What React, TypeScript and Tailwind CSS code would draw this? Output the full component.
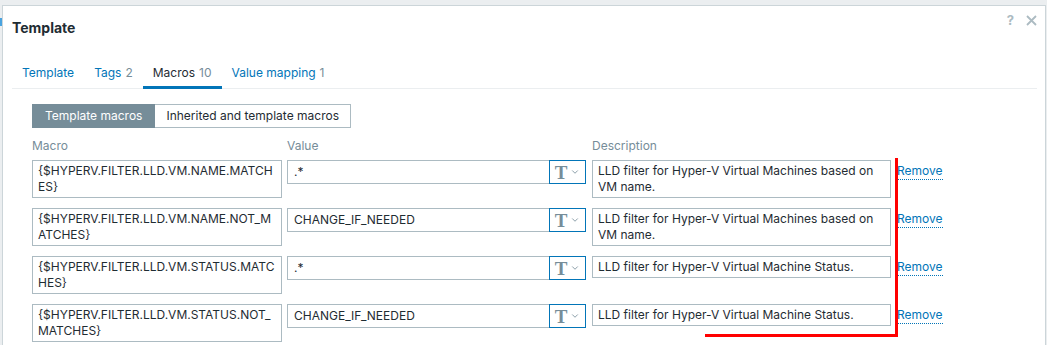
import { ChevronDown } from "lucide-react";

type MacroRow = {
  macro: string[];
  value: string;
  description: string[];
};

const rows: MacroRow[] = [
  {
    macro: ["{$HYPERV.FILTER.LLD.VM.NAME.MATCH", "ES}"],
    value: ".*",
    description: ["LLD filter for Hyper-V Virtual Machines based on", "VM name."],
  },
  {
    macro: ["{$HYPERV.FILTER.LLD.VM.NAME.NOT_M", "ATCHES}"],
    value: "CHANGE_IF_NEEDED",
    description: ["LLD filter for Hyper-V Virtual Machines based on", "VM name."],
  },
  {
    macro: ["{$HYPERV.FILTER.LLD.VM.STATUS.MATC", "HES}"],
    value: ".*",
    description: ["LLD filter for Hyper-V Virtual Machine Status."],
  },
  {
    macro: ["{$HYPERV.FILTER.LLD.VM.STATUS.NOT_", "MATCHES}"],
    value: "CHANGE_IF_NEEDED",
    description: ["LLD filter for Hyper-V Virtual Machine Status."],
  },
];

const tabs = [
  { label: "Template", count: "" },
  { label: "Tags", count: "2" },
  { label: "Macros", count: "10", active: true },
  { label: "Value mapping", count: "1" },
];

function Row({ row }: { row: MacroRow }) {
  return (
    <div className="flex items-start mb-[10px]">
      {/* Macro */}
      <div className="w-[250px] border border-[#acbbc2] px-[5px] py-[2px] leading-[16px] text-[12px] text-[#1f2c33]">
        {row.macro.map((l, i) => (
          <div key={i} className="whitespace-nowrap">
            {l}
          </div>
        ))}
      </div>

      {/* Value */}
      <div className="ml-[5px] flex h-[24px]">
        <div className="w-[262px] border border-[#acbbc2] border-r-0 px-[6px] leading-[22px] text-[12px] text-[#1f2c33]">
          {row.value}
        </div>
        <div className="w-[37px] border border-[#0275b8] flex items-center justify-center gap-[3px]">
          <span
            className="text-[19px] leading-none font-bold text-[#768d99]"
            style={{ fontFamily: '"Liberation Serif", serif' }}
          >
            T
          </span>
          <ChevronDown size={10} strokeWidth={2} className="text-[#768d99]" />
        </div>
      </div>

      {/* Description */}
      <div className="ml-[6px] w-[299px] border border-[#acbbc2] px-[5px] py-[2px] leading-[16px] text-[12px] text-[#1f2c33]">
        {row.description.map((l, i) => (
          <div key={i} className="whitespace-nowrap">
            {l}
          </div>
        ))}
      </div>

      <a className="ml-[6px] mt-[3px] text-[12px] leading-[16px] text-[#0275b8] border-b border-dotted border-[#0275b8]">
        Remove
      </a>
    </div>
  );
}

export default function App() {
  return (
    <div
      className="relative h-[345px] w-[1047px] overflow-hidden bg-[#ebeef0] pt-[5px] pl-[2px] pr-[1px]"
      style={{ fontFamily: "Inter, Arial, sans-serif" }}
    >
      {/* bit of the page behind the dialog */}
      <div className="absolute left-0 top-[18px] h-[8px] w-[2px] bg-[#4aa3df]" />

      <div className="relative h-[400px] bg-white border border-[#ccd5d9]">
        {/* Header */}
        <div className="pl-[9px] pt-[13px] text-[14px] leading-[18px] font-bold text-[#1f2c33]">
          Template
        </div>
        <div className="absolute right-[8px] top-[8px] flex items-center gap-[12px] text-[#acbbc2]">
          <span className="text-[13px] font-bold leading-none">?</span>
          <svg width="11" height="11" viewBox="0 0 11 11">
            <path d="M1 1L10 10M10 1L1 10" stroke="#acbbc2" strokeWidth="1.8" />
          </svg>
        </div>

        {/* Tabs */}
        <div className="mt-[22px] ml-[9px] mr-[8px] flex border-b border-[#ebeef0] text-[12px] leading-[16px]">
          {tabs.map((t) => (
            <div
              key={t.label}
              className={
                t.active
                  ? "-mb-px px-[10px] pt-[6px] pb-[5px] border-b-[3px] border-[#0275b8] text-[#1f2c33]"
                  : "-mb-px px-[10px] pt-[6px] pb-[5px] border-b-[3px] border-transparent text-[#0275b8]"
              }
            >
              {t.label}
              {t.count && <span className="ml-[4px] text-[#768d99]">{t.count}</span>}
            </div>
          ))}
        </div>

        {/* Content */}
        <div className="pl-[29px] pt-[15px]">
          <div className="flex h-[24px] text-[12px] leading-[22px]">
            <div className="px-[12px] bg-[#768d99] border border-[#768d99] text-white">Template macros</div>
            <div className="px-[11px] border border-[#acbbc2] border-l-0 text-[#1f2c33]">
              Inherited and template macros
            </div>
          </div>

          <div className="mt-[10px] flex text-[12px] leading-[16px] text-[#768d99]">
            <div className="w-[255px]">Macro</div>
            <div className="w-[305px]">Value</div>
            <div>Description</div>
          </div>

          <div className="mt-[6px]">
            {rows.map((r, i) => (
              <Row key={i} row={r} />
            ))}
          </div>
        </div>
      </div>

      {/* red annotation drawn over the screenshot */}
      <div className="absolute left-[895px] top-[158px] h-[179px] w-[3px] bg-[#f00]" />
      <div className="absolute left-[705px] top-[334px] h-[3px] w-[193px] bg-[#f00]" />
    </div>
  );
}
